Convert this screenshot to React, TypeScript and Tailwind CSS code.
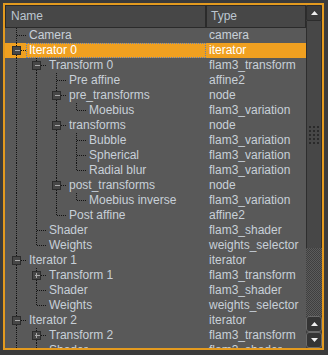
type TreeNode = {
  name: string;
  type: string;
  open?: boolean;
  selected?: boolean;
  children?: TreeNode[];
};

type FlatRow = {
  node: TreeNode;
  depth: number;
  last: boolean;
  trail: boolean[]; // per ancestor level: does that ancestor have a next sibling
};

// ─── Data ────────────────────────────────────────────────────────────────────

const iteratorChildren = (n: number): TreeNode[] => [
  { name: `Transform ${n}`, type: 'flam3_transform', children: [{ name: 'Pre affine', type: 'affine2' }] },
  { name: 'Shader', type: 'flam3_shader' },
  { name: 'Weights', type: 'weights_selector' },
];

const tree: TreeNode[] = [
  { name: 'Camera', type: 'camera' },
  {
    name: 'Iterator 0',
    type: 'iterator',
    open: true,
    selected: true,
    children: [
      {
        name: 'Transform 0',
        type: 'flam3_transform',
        open: true,
        children: [
          { name: 'Pre affine', type: 'affine2' },
          { name: 'pre_transforms', type: 'node', open: true, children: [{ name: 'Moebius', type: 'flam3_variation' }] },
          {
            name: 'transforms',
            type: 'node',
            open: true,
            children: [
              { name: 'Bubble', type: 'flam3_variation' },
              { name: 'Spherical', type: 'flam3_variation' },
              { name: 'Radial blur', type: 'flam3_variation' },
            ],
          },
          {
            name: 'post_transforms',
            type: 'node',
            open: true,
            children: [{ name: 'Moebius inverse', type: 'flam3_variation' }],
          },
          { name: 'Post affine', type: 'affine2' },
        ],
      },
      { name: 'Shader', type: 'flam3_shader' },
      { name: 'Weights', type: 'weights_selector' },
    ],
  },
  { name: 'Iterator 1', type: 'iterator', open: true, children: iteratorChildren(1) },
  { name: 'Iterator 2', type: 'iterator', open: true, children: iteratorChildren(2) },
  { name: 'Iterator 3', type: 'iterator', open: true, children: iteratorChildren(3) },
];

function flatten(nodes: TreeNode[], depth = 0, trail: boolean[] = []): FlatRow[] {
  const out: FlatRow[] = [];
  nodes.forEach((node, i) => {
    const last = i === nodes.length - 1;
    out.push({ node, depth, last, trail });
    if (node.open && node.children) {
      out.push(...flatten(node.children, depth + 1, [...trail, !last]));
    }
  });
  return out;
}

const rows = flatten(tree);

// ─── Tree connector drawing ──────────────────────────────────────────────────

const DOT = { stroke: '#141414', strokeWidth: 1, strokeDasharray: '1 1', shapeRendering: 'crispEdges' as const };

function Connectors({ row }: { row: FlatRow }) {
  const cx = 11 + 20 * row.depth + 0.5;
  const hasKids = !!row.node.children?.length;
  return (
    <svg className="absolute left-0 top-0" width={201} height={15}>
      {row.trail.map((cont, i) =>
        cont ? <line key={i} x1={11.5 + 20 * i} y1={0} x2={11.5 + 20 * i} y2={15} {...DOT} /> : null,
      )}
      <line x1={cx} y1={0} x2={cx} y2={row.last ? 8 : 15} {...DOT} />
      <line x1={cx} y1={7.5} x2={cx + 10} y2={7.5} {...DOT} />
      {hasKids && (
        <g shapeRendering="crispEdges">
          <rect x={cx - 4} y={3.5} width={8} height={8} fill="#474747" stroke="#2c2c2c" />
          <line x1={cx - 2} y1={7.5} x2={cx + 3} y2={7.5} stroke="#a8a8a8" />
          {!row.node.open && <line x1={cx} y1={5} x2={cx} y2={10} stroke="#a8a8a8" />}
        </g>
      )}
    </svg>
  );
}

// ─── Scrollbar ───────────────────────────────────────────────────────────────

function Arrow({ down }: { down?: boolean }) {
  return (
    <svg width={7} height={4} viewBox="0 0 7 4">
      <polygon points={down ? '0,0 7,0 3.5,4' : '3.5,0 7,4 0,4'} fill="#f0f0f0" />
    </svg>
  );
}

function Scrollbar() {
  return (
    <div className="flex w-[16px] shrink-0 flex-col bg-[#3e3e3e]">
      <div className="flex h-[16px] items-center justify-center rounded-[2px] border border-[#2c2c2c] bg-[#3b3b3b]">
        <Arrow />
      </div>
      <div className="flex h-[227px] items-center justify-center border-x border-[#2e2e2e] bg-[#474747]">
        <div className="grid grid-cols-3 gap-[2px]">
          {Array.from({ length: 15 }).map((_, i) => (
            <div key={i} className="h-[2px] w-[2px] bg-[#2a2a2a]" />
          ))}
        </div>
      </div>
      <div className="flex-1 bg-[repeating-conic-gradient(#5c5c5c_0%_25%,#3f3f3f_0%_50%)] bg-[length:2px_2px]" />
      <div className="flex h-[16px] items-center justify-center rounded-[3px] border border-[#6a6a6a] bg-[#343434]">
        <Arrow />
      </div>
      <div className="flex h-[16px] items-center justify-center rounded-[3px] border border-[#6a6a6a] bg-[#343434]">
        <Arrow down />
      </div>
    </div>
  );
}

// ─── App ─────────────────────────────────────────────────────────────────────

export default function App() {
  return (
    <div
      className="h-[355px] w-[328px] overflow-hidden bg-[#3b3b3b] pl-[3px] pt-[3px] text-[12px] leading-[15px]"
      style={{ fontFamily: '"Liberation Sans", Arial, sans-serif' }}
    >
      <div className="flex h-[347px] w-[321px] border-2 border-[#e39a1f] bg-[#595959]">
        <div className="flex w-[301px] shrink-0 flex-col overflow-hidden">
          <div className="flex h-[23px] shrink-0 bg-[#3e3e3e] text-[#bcc6d0]">
            <div className="flex w-[201px] items-center border border-[#2b2b2b] bg-[#474747] pl-[5px]">Name</div>
            <div className="flex w-[100px] items-center border border-[#2b2b2b] bg-[#474747] pl-[4px]">Type</div>
          </div>
          <div className="flex flex-col">
            {rows.map((row, i) => (
              <div
                key={i}
                className={`flex h-[15px] shrink-0 ${row.node.selected ? 'bg-[#f0a020] text-white' : 'text-[#c8d0d8]'}`}
              >
                <div className="relative w-[201px] shrink-0 whitespace-nowrap">
                  <Connectors row={row} />
                  <span className="relative" style={{ paddingLeft: 24 + 20 * row.depth }}>
                    {row.node.name}
                  </span>
                  {row.node.selected && (
                    <div className="absolute inset-y-0 left-[21px] right-0 border border-dotted border-[#5f7fb5]" />
                  )}
                </div>
                <div className="w-[100px] whitespace-nowrap pl-[3px]">{row.node.type}</div>
              </div>
            ))}
          </div>
        </div>
        <Scrollbar />
      </div>
    </div>
  );
}
